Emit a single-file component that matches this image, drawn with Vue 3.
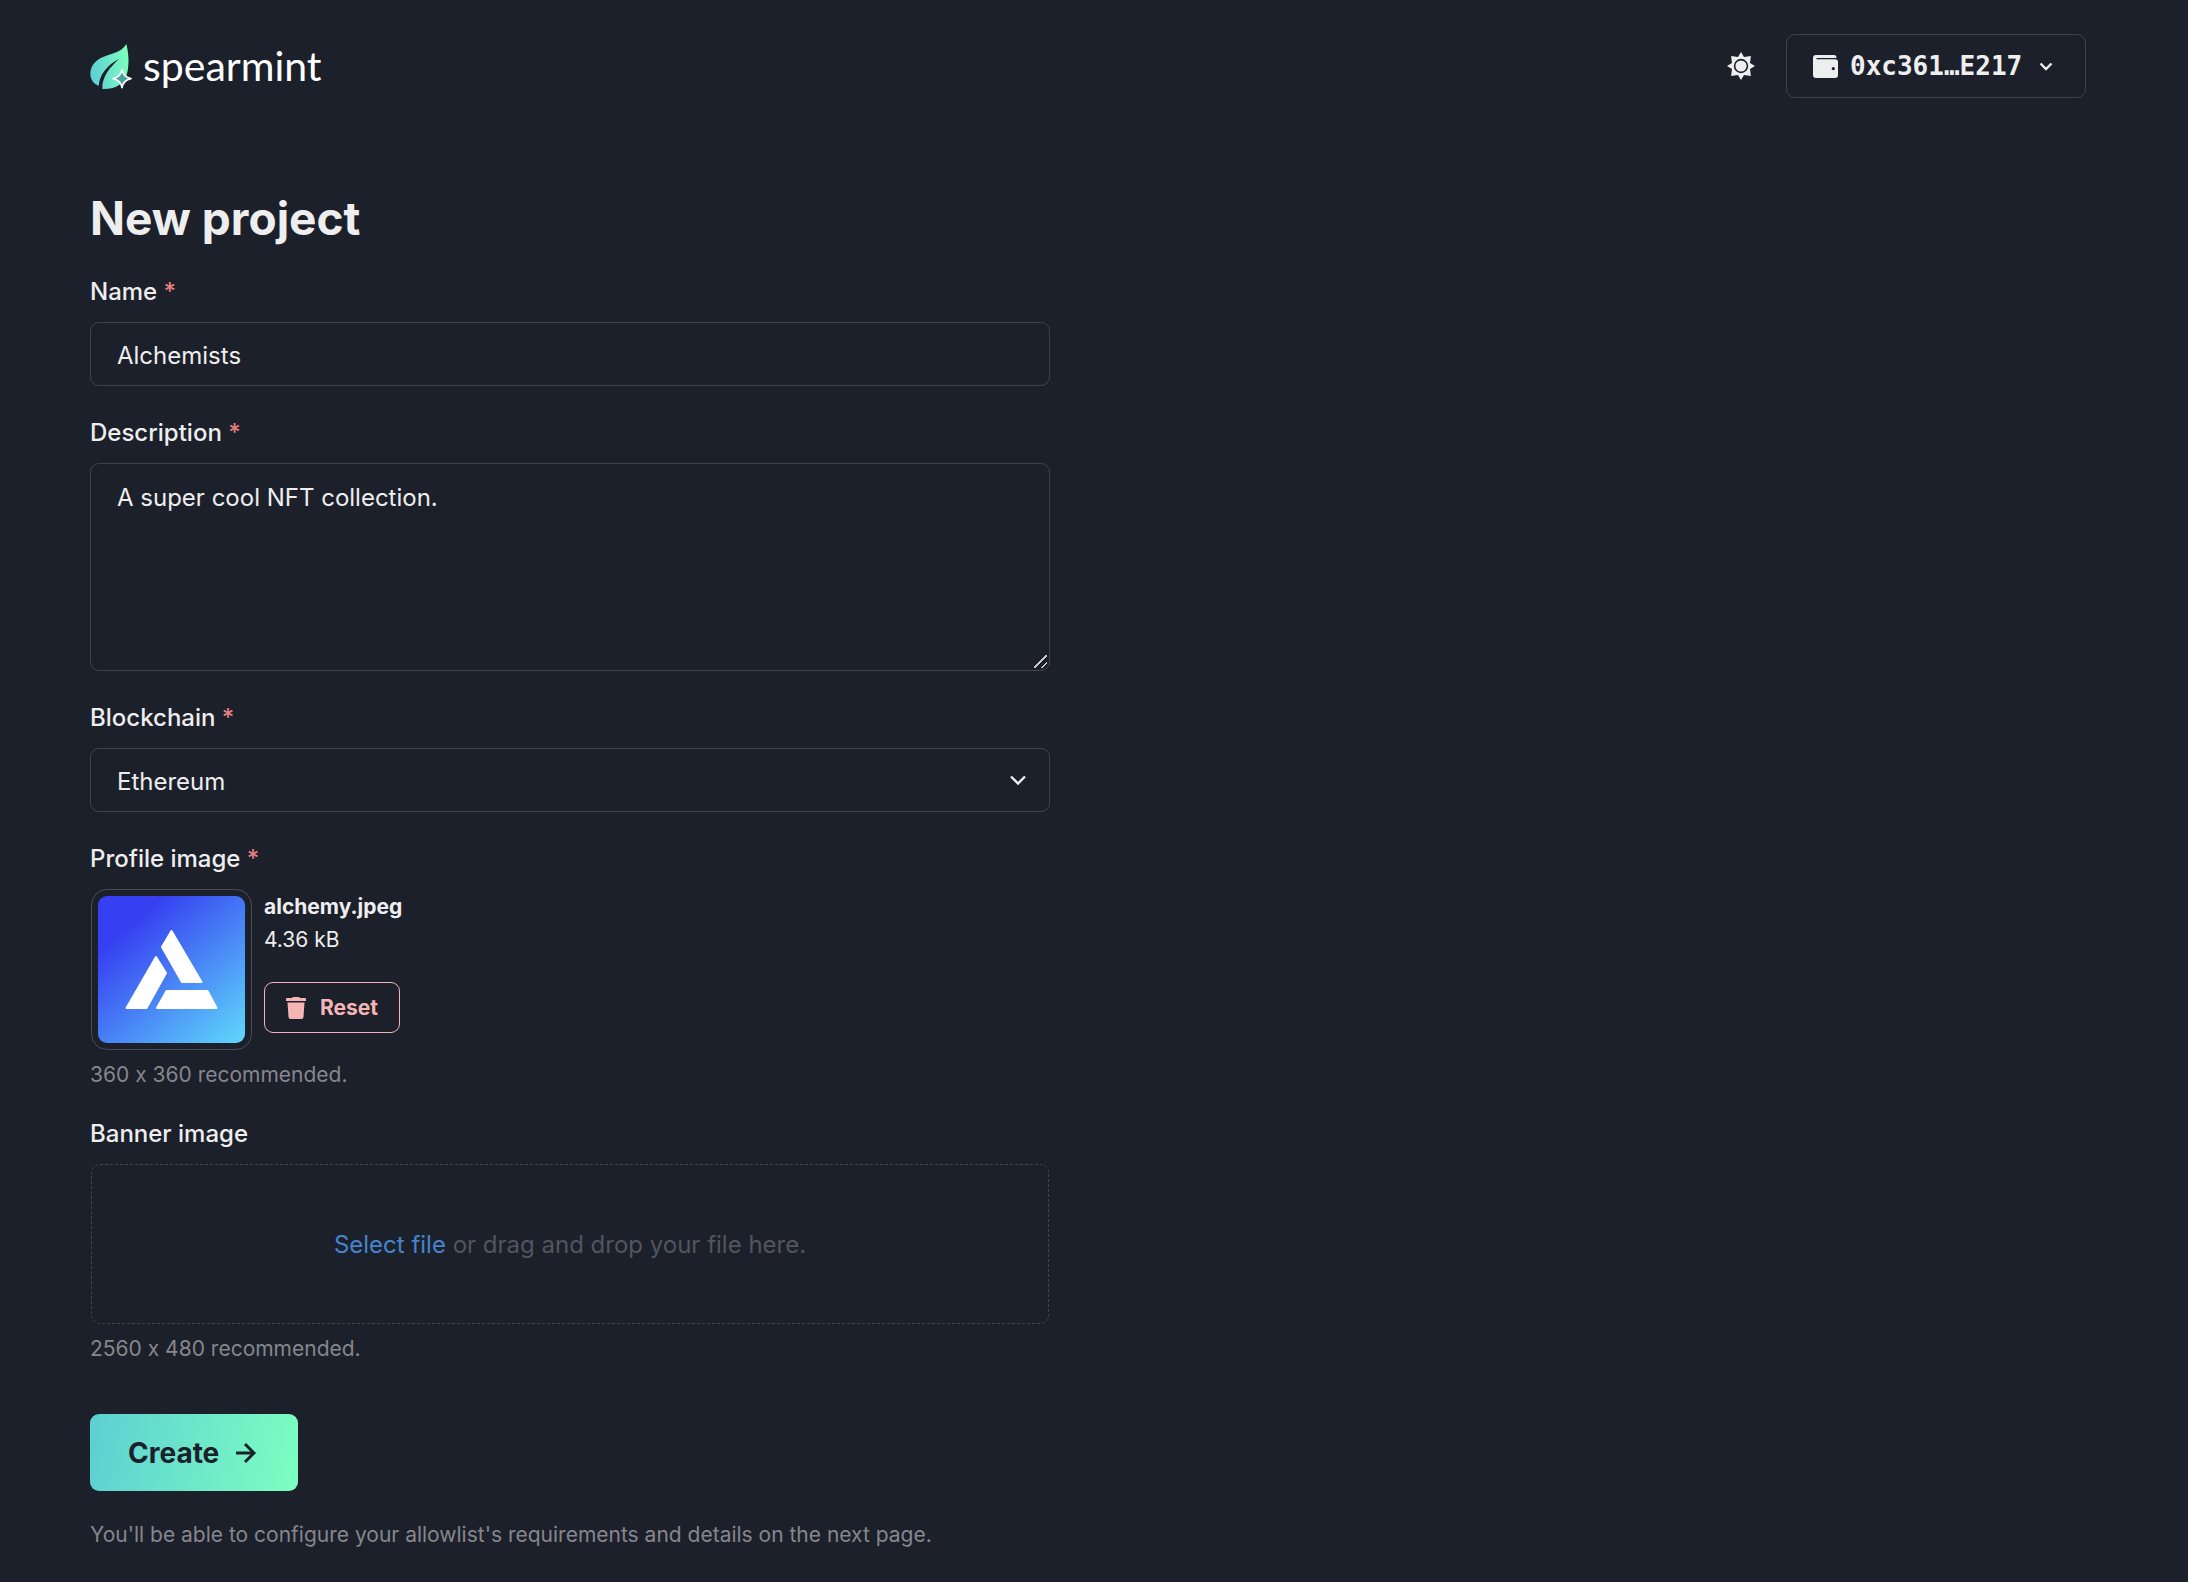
<template>
  <div class="page">
    <!-- Top bar -->
    <header class="navbar">
      <a class="logo" href="/">
        <svg class="logo-leaf" viewBox="29 36 132 144" aria-hidden="true">
          <defs>
            <linearGradient id="leaf" x1="0" y1="0.6" x2="1" y2="0.4">
              <stop offset="0" stop-color="#5ccfd3" />
              <stop offset="1" stop-color="#7dffc0" />
            </linearGradient>
          </defs>
          <path
            fill="url(#leaf)"
            d="M138 42C128 60 110 67 84 75C50 85 30 104 30 132C30 148 40 162 55 167C58 136 76 108 117 86C90 110 64 140 66 177C110 178 136 158 142 122C147 94 144 66 138 42Z"
          />
          <path
            fill="#4aa5a0"
            stroke="#ffffff"
            stroke-width="5"
            stroke-linejoin="round"
            d="M125 119C128 135 136 143 152 146C136 149 128 157 125 173C122 157 114 149 98 146C114 143 122 135 125 119Z"
          />
        </svg>
        <span class="logo-text">spearmint</span>
      </a>

      <div class="navbar-actions">
        <button class="theme-toggle" type="button" aria-label="Toggle color mode">
          <svg viewBox="0 0 28 28" aria-hidden="true">
            <path
              fill="currentColor"
              d="M14 0L17 5L23.9 4.1L23 11L28 14L23 17L23.9 23.9L17 23L14 28L11 23L4.1 23.9L5 17L0 14L5 11L4.1 4.1L11 5Z"
            />
            <circle cx="14" cy="14" r="6.4" fill="currentColor" stroke="#1c202b" stroke-width="1.6" />
          </svg>
        </button>
        <button class="wallet" type="button">
          <svg class="wallet-icon" viewBox="0 0 25 23" aria-hidden="true">
            <path
              fill="currentColor"
              fill-rule="evenodd"
              d="M3 0H21Q23.500 0 23.500 3H3.500V4.200H22Q25 4.200 25 7V20Q25 23 22 23H3Q0 23 0 20V3Q0 0 3 0ZM20.300 11.900A1.700 1.700 0 1 0 20.300 15.300A1.700 1.700 0 1 0 20.300 11.900Z"
            />
          </svg>
          <span class="wallet-address">0xc361…E217</span>
          <svg class="wallet-chevron" viewBox="0 0 14 14" aria-hidden="true">
            <path d="M1.500 4.500L7 10L12.500 4.500" />
          </svg>
        </button>
      </div>
    </header>

    <main>
      <form class="form" @submit.prevent>
        <h1 class="title">New project</h1>

        <div class="field">
          <label class="label" for="name">Name <span class="required">*</span></label>
          <input id="name" v-model="name" class="control" type="text" required />
        </div>

        <div class="field">
          <label class="label" for="description">Description <span class="required">*</span></label>
          <textarea id="description" v-model="description" class="control textarea" required></textarea>
        </div>

        <div class="field">
          <label class="label" for="blockchain">Blockchain <span class="required">*</span></label>
          <div class="select-wrap">
            <select id="blockchain" v-model="blockchain" class="control select" required>
              <option v-for="chain in chains" :key="chain">{{ chain }}</option>
            </select>
            <svg class="select-icon" viewBox="0 0 20 20" aria-hidden="true">
              <path d="M3 6.500L10 13.500L17 6.500" />
            </svg>
          </div>
        </div>

        <div class="field">
          <label class="label" for="profile">Profile image <span class="required">*</span></label>
          <input id="profile" class="file-input" type="file" accept="image/*" />
          <div class="preview">
            <div class="preview-frame">
              <svg class="preview-image" viewBox="0 0 147 147" role="img" aria-label="alchemy.jpeg">
                <defs>
                  <linearGradient id="alchemy" x1="0.1" y1="0.1" x2="0.9" y2="1">
                    <stop offset="0.12" stop-color="#363ff1" />
                    <stop offset="1" stop-color="#5dd0fb" />
                  </linearGradient>
                </defs>
                <rect width="147" height="147" fill="url(#alchemy)" />
                <g fill="#ffffff" stroke="#ffffff" stroke-width="2" stroke-linejoin="round">
                  <path d="M73.500 35L103.500 86H84L64 51Z" />
                  <path d="M58 61L68 77L48.500 112H28.500Z" />
                  <path d="M68.500 95H109.500L118.500 112H59Z" />
                </g>
              </svg>
            </div>
            <div class="preview-info">
              <strong>{{ file.name }}</strong>
              <span>{{ file.size }}</span>
              <button class="reset" type="button">
                <svg viewBox="0 0 20 22" aria-hidden="true">
                  <path
                    fill="currentColor"
                    d="M7 0H13L14 1H19Q20 1 20 2V4H0V2Q0 1 1 1H6ZM1.500 5.500H18.500L17.500 20Q17.300 22 15.500 22H4.500Q2.700 22 2.500 20Z"
                  />
                </svg>
                Reset
              </button>
            </div>
          </div>
          <p class="help">360 x 360 recommended.</p>
        </div>

        <div class="field">
          <label class="label" for="banner">Banner image</label>
          <input id="banner" class="file-input" type="file" accept="image/*" />
          <label class="dropzone" for="banner">
            <span><span class="dropzone-link">Select file</span> or drag and drop your file here.</span>
          </label>
          <p class="help">2560 x 480 recommended.</p>
        </div>

        <button class="create" type="submit">
          Create
          <svg viewBox="0 0 28 28" aria-hidden="true">
            <path d="M4 14H22M13 5L22 14L13 23" />
          </svg>
        </button>
        <p class="note">You'll be able to configure your allowlist's requirements and details on the next page.</p>
      </form>
    </main>
  </div>
</template>

<script setup>
import { ref } from 'vue';

const chains = ['Ethereum', 'Polygon', 'Solana'];

const name = ref('Alchemists');
const description = ref('A super cool NFT collection.');
const blockchain = ref('Ethereum');
const file = ref({ name: 'alchemy.jpeg', size: '4.36 kB' });
</script>

<style>
body {
  margin: 0;
  background: #1c202b;
  color-scheme: dark;
}
</style>

<style scoped>
.page {
  box-sizing: border-box;
  padding: 34px 102px 34px 90px;
  color: #eeeeee;
  font-family: Inter, 'Liberation Sans', sans-serif;
  font-size: 24px;
  /* keep the "x" in "360 x 360" a letter */
  font-variant-ligatures: no-contextual;
}

button,
input,
textarea,
select {
  font: inherit;
  color: inherit;
}

button {
  cursor: pointer;
}

/* Top bar */
.navbar {
  display: flex;
  justify-content: space-between;
  align-items: center;
  height: 64px;
  margin-bottom: 92px;
}

.logo {
  display: flex;
  align-items: center;
  gap: 9px;
  color: #ffffff;
  text-decoration: none;
}

.logo-leaf {
  width: 44px;
  height: 48px;
}

.logo-text {
  font-family: Lato, sans-serif;
  font-size: 41px;
  line-height: 48px;
}

.navbar-actions {
  display: flex;
  align-items: center;
  gap: 31px;
}

.theme-toggle {
  display: flex;
  padding: 0;
  border: 0;
  background: none;
}

.theme-toggle svg {
  width: 28px;
  height: 28px;
}

.wallet {
  display: flex;
  align-items: center;
  box-sizing: border-box;
  height: 64px;
  min-width: 300px;
  padding: 0 26px;
  border: 1px solid #3f434c;
  border-radius: 9px;
  background: none;
}

.wallet-icon {
  width: 25px;
  height: 23px;
  margin-right: 12px;
}

.wallet-address {
  font-family: 'DejaVu Sans Mono', monospace;
  font-size: 26px;
  font-weight: 700;
}

.wallet-chevron {
  width: 14px;
  height: 14px;
  margin-left: 17px;
}

.wallet-chevron,
.select-icon {
  fill: none;
  stroke: currentColor;
  stroke-width: 2.4;
}

/* Form */
.form {
  width: 100%;
  max-width: 960px;
}

.title {
  margin: 0 0 27px;
  font-size: 46px;
  font-weight: 700;
  line-height: 56px;
}

.field {
  margin-bottom: 28px;
}

.label {
  display: block;
  margin-bottom: 11px;
  font-weight: 500;
  line-height: 38px;
}

.required {
  color: #e57f7f;
}

.control {
  display: block;
  box-sizing: border-box;
  width: 100%;
  height: 64px;
  margin: 0;
  padding: 3px 26px 0;
  border: 1px solid #3f434c;
  border-radius: 9px;
  outline: none;
  background: transparent;
}

.textarea {
  height: 208px;
  padding: 16px 26px;
  line-height: 36px;
  resize: vertical;
}

/* two diagonal grip lines */
.textarea::-webkit-resizer {
  background: linear-gradient(
      135deg,
      transparent 40%,
      #0e1016 40% 45%,
      #c4c4c6 45% 54%,
      #0e1016 54% 59%,
      transparent 59% 71%,
      #0e1016 71% 75%,
      #c4c4c6 75% 84%,
      transparent 84%
    )
    0 0 / 13px 13px no-repeat;
}

.select-wrap {
  display: grid;
  align-items: center;
}

.select {
  grid-area: 1 / 1;
  appearance: none;
}

.select-icon {
  grid-area: 1 / 1;
  justify-self: end;
  width: 20px;
  height: 20px;
  margin-right: 22px;
  pointer-events: none;
}

.select option {
  background: #1c202b;
}

.file-input {
  position: absolute;
  width: 1px;
  height: 1px;
  opacity: 0;
}

.preview {
  display: flex;
  gap: 12px;
}

.preview-frame {
  box-sizing: border-box;
  width: 161px;
  height: 161px;
  margin-left: 1px;
  padding: 6px;
  border: 1px solid #4a4d56;
  border-radius: 16px;
}

.preview-image {
  display: block;
  width: 147px;
  height: 147px;
  border-radius: 9px;
}

.preview-info {
  display: flex;
  flex-direction: column;
  align-items: flex-start;
  padding-top: 1px;
  font-size: 21px;
  line-height: 33px;
}

.reset {
  display: flex;
  align-items: center;
  gap: 14px;
  box-sizing: border-box;
  height: 51px;
  margin-top: 26px;
  padding: 0 21px;
  border: 1px solid #f5b5b5;
  border-radius: 9px;
  background: none;
  color: #f5b5b5;
  font-weight: 700;
}

.reset svg {
  width: 20px;
  height: 22px;
}

.help,
.note {
  margin: 0;
  color: #85878c;
  font-size: 21px;
  line-height: 24px;
}

.help {
  margin-top: 13px;
}

.dropzone {
  display: flex;
  justify-content: center;
  align-items: center;
  box-sizing: border-box;
  height: 160px;
  margin: 0 1px;
  border: 1px dashed #41454e;
  border-radius: 9px;
  color: #52555e;
  cursor: pointer;
}

.dropzone-link {
  color: #4784cd;
}

.create {
  display: flex;
  align-items: center;
  gap: 13px;
  height: 77px;
  margin: 53px 0 32px;
  padding: 0 38px;
  border: 0;
  border-radius: 9px;
  background: linear-gradient(100deg, #5ccfd3, #7dffc0);
  color: #1c202b;
  font-size: 28px;
  font-weight: 700;
}

.create svg {
  width: 28px;
  height: 28px;
  fill: none;
  stroke: currentColor;
  stroke-width: 3;
}
</style>
